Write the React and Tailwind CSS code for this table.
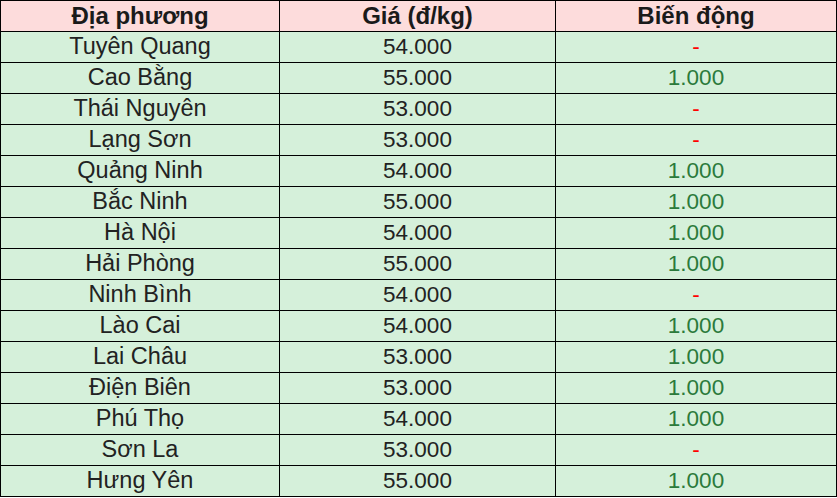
const rows = [
  ['Tuyên Quang', '54.000', null],
  ['Cao Bằng', '55.000', '1.000'],
  ['Thái Nguyên', '53.000', null],
  ['Lạng Sơn', '53.000', null],
  ['Quảng Ninh', '54.000', '1.000'],
  ['Bắc Ninh', '55.000', '1.000'],
  ['Hà Nội', '54.000', '1.000'],
  ['Hải Phòng', '55.000', '1.000'],
  ['Ninh Bình', '54.000', null],
  ['Lào Cai', '54.000', '1.000'],
  ['Lai Châu', '53.000', '1.000'],
  ['Điện Biên', '53.000', '1.000'],
  ['Phú Thọ', '54.000', '1.000'],
  ['Sơn La', '53.000', null],
  ['Hưng Yên', '55.000', '1.000'],
];

export default function App() {
  return (
    <div className="w-[837px] h-[498px] bg-white font-['Liberation_Sans',Arial,sans-serif]">
      <table className="w-[836px] border-collapse table-fixed">
        <colgroup>
          <col className="w-[279px]" />
          <col className="w-[276px]" />
          <col className="w-[281px]" />
        </colgroup>
        <thead>
          <tr className="h-[31px] bg-[#fddcdc] text-[24px] font-bold text-[#1a1a1a]">
            <th className="border border-black p-0 leading-none">Địa phương</th>
            <th className="border border-black p-0 leading-none">Giá (đ/kg)</th>
            <th className="border border-black p-0 leading-none">Biến động</th>
          </tr>
        </thead>
        <tbody>
          {rows.map(([name, price, change]) => (
            <tr key={name} className="h-[31px] bg-[#d5f0da] text-[#222]">
              <td className="border border-black p-0 text-center leading-none text-[23.5px]">{name}</td>
              <td className="border border-black p-0 text-center leading-none text-[22.5px]">{price}</td>
              <td className="border border-black p-0 text-center leading-none text-[22.5px]">
                {change ? (
                  <span className="text-[#2b7a3b]">{change}</span>
                ) : (
                  <span className="text-[#ff0000]">-</span>
                )}
              </td>
            </tr>
          ))}
        </tbody>
      </table>
    </div>
  );
}
